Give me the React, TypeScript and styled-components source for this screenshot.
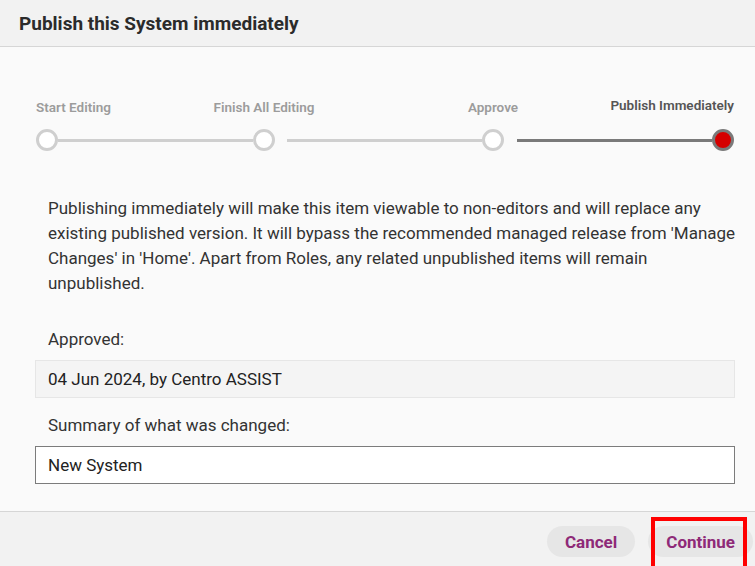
import React from 'react';
import styled, { createGlobalStyle } from 'styled-components';

const GlobalStyle = createGlobalStyle`
	html, body {
		margin: 0;
		padding: 0;
		background: #fafafa;
	}
	body {
		font-family: Roboto, 'Liberation Sans', Arial, sans-serif;
		overflow: hidden;
	}
`;

const Dialog = styled.div`
	width: 755px;
	height: 566px;
	display: flex;
	flex-direction: column;
	background: #fafafa;
	overflow: hidden;
`;

const Header = styled.header`
	height: 46px;
	flex-shrink: 0;
	display: flex;
	align-items: center;
	padding: 0 19px;
	background: #f2f2f2;
	border-bottom: 1px solid #d6d6d6;
`;

const Title = styled.h2`
	margin: 0;
	font-size: 19px;
	font-weight: 700;
	color: #2b2b2b;
`;

const Body = styled.main`
	flex: 1;
	padding: 50px 20px 0 35px;
	display: flex;
	flex-direction: column;
`;

const Stepper = styled.div`
	display: flex;
	align-items: flex-end;
	padding: 0 1px;
`;

type Align = 'flex-start' | 'center' | 'flex-end';

const Step = styled.div<{ $align: Align }>`
	width: 22px;
	flex-shrink: 0;
	display: flex;
	flex-direction: column;
	align-items: ${({ $align }) => $align};
`;

const StepLabel = styled.span<{ $active?: boolean }>`
	white-space: nowrap;
	font-size: 13.5px;
	font-weight: 600;
	line-height: 16px;
	color: ${({ $active }) => ($active ? '#555555' : '#9c9c9c')};
	margin-bottom: ${({ $active }) => ($active ? '16px' : '14px')};
`;

const Dot = styled.span<{ $active?: boolean }>`
	box-sizing: border-box;
	width: 22px;
	height: 22px;
	border-radius: 50%;
	border: 3px solid ${({ $active }) => ($active ? '#7a7a7a' : '#cfcfcf')};
	background: ${({ $active }) => ($active ? '#d50000' : '#ffffff')};
`;

const Connector = styled.span<{ $gap: number; $active?: boolean }>`
	flex: 1;
	height: 3px;
	margin: 0 0 9.5px ${({ $gap }) => $gap}px;
	background: ${({ $active }) => ($active ? '#7a7a7a' : '#cfcfcf')};
`;

const Description = styled.p`
	margin: 45px -5px 0 0;
	padding: 0 0 0 13px;
	font-size: 17px;
	line-height: 25px;
	color: #333333;
`;

const FieldLabel = styled.div`
	padding-left: 13px;
	font-size: 17px;
	line-height: 25px;
	color: #333333;
`;

const Field = styled.div<{ $top: number }>`
	margin-top: ${({ $top }) => $top}px;
	display: flex;
	flex-direction: column;
	gap: 8px;
`;

const ReadOnlyBox = styled.div`
	box-sizing: border-box;
	height: 38px;
	display: flex;
	align-items: center;
	padding: 0 12px;
	background: #f4f4f4;
	border: 1px solid #e6e6e6;
	font-size: 17px;
	color: #222222;
`;

const TextInput = styled.input`
	box-sizing: border-box;
	height: 38px;
	width: 100%;
	padding: 0 12px;
	background: #ffffff;
	border: 1px solid #7c7c7c;
	border-radius: 0;
	font-family: inherit;
	font-size: 17px;
	color: #222222;
	outline: none;
`;

const Footer = styled.footer`
	height: 55px;
	flex-shrink: 0;
	box-sizing: border-box;
	background: #f2f2f2;
	border-top: 1px solid #d6d6d6;
	display: flex;
	justify-content: flex-end;
	align-items: flex-start;
	gap: 13px;
	padding: 14px 2px 0 0;
`;

const Button = styled.button`
	position: relative;
	height: 31px;
	padding: 0 18px;
	border: none;
	border-radius: 16px;
	background: #e6e6e6;
	font-family: inherit;
	font-size: 17px;
	font-weight: 700;
	color: #8e2a78;
	cursor: pointer;
`;

// red annotation frame drawn over the Continue button
const Highlight = styled.span`
	position: absolute;
	left: 3px;
	right: 6px;
	top: -9px;
	height: 56px;
	border: 4px solid #ff0000;
	box-sizing: border-box;
	pointer-events: none;
`;

const steps = [
	{ label: 'Start Editing', align: 'flex-start' as Align, gap: 0 },
	{ label: 'Finish All Editing', align: 'center' as Align, gap: 0 },
	{ label: 'Approve', align: 'center' as Align, gap: 12 },
	{ label: 'Publish Immediately', align: 'flex-end' as Align, gap: 13, active: true },
];

const App = () => {
	return (
		<>
			<GlobalStyle />
			<Dialog>
				<Header>
					<Title>Publish this System immediately</Title>
				</Header>
				<Body>
					<Stepper>
						{steps.map((step, i) => (
							<React.Fragment key={step.label}>
								{i > 0 && <Connector $gap={step.gap} $active={step.active} />}
								<Step $align={step.align}>
									<StepLabel $active={step.active}>{step.label}</StepLabel>
									<Dot $active={step.active} />
								</Step>
							</React.Fragment>
						))}
					</Stepper>
					<Description>
						Publishing immediately will make this item viewable to non-editors and will replace any
						existing published version. It will bypass the recommended managed release from 'Manage
						Changes' in 'Home'. Apart from Roles, any related unpublished items will remain
						unpublished.
					</Description>
					<Field $top={31}>
						<FieldLabel>Approved:</FieldLabel>
						<ReadOnlyBox>04 Jun 2024, by Centro ASSIST</ReadOnlyBox>
					</Field>
					<Field $top={15}>
						<FieldLabel>Summary of what was changed:</FieldLabel>
						<TextInput defaultValue="New System" />
					</Field>
				</Body>
				<Footer>
					<Button>Cancel</Button>
					<Button>
						Continue
						<Highlight />
					</Button>
				</Footer>
			</Dialog>
		</>
	);
};

export default App;
